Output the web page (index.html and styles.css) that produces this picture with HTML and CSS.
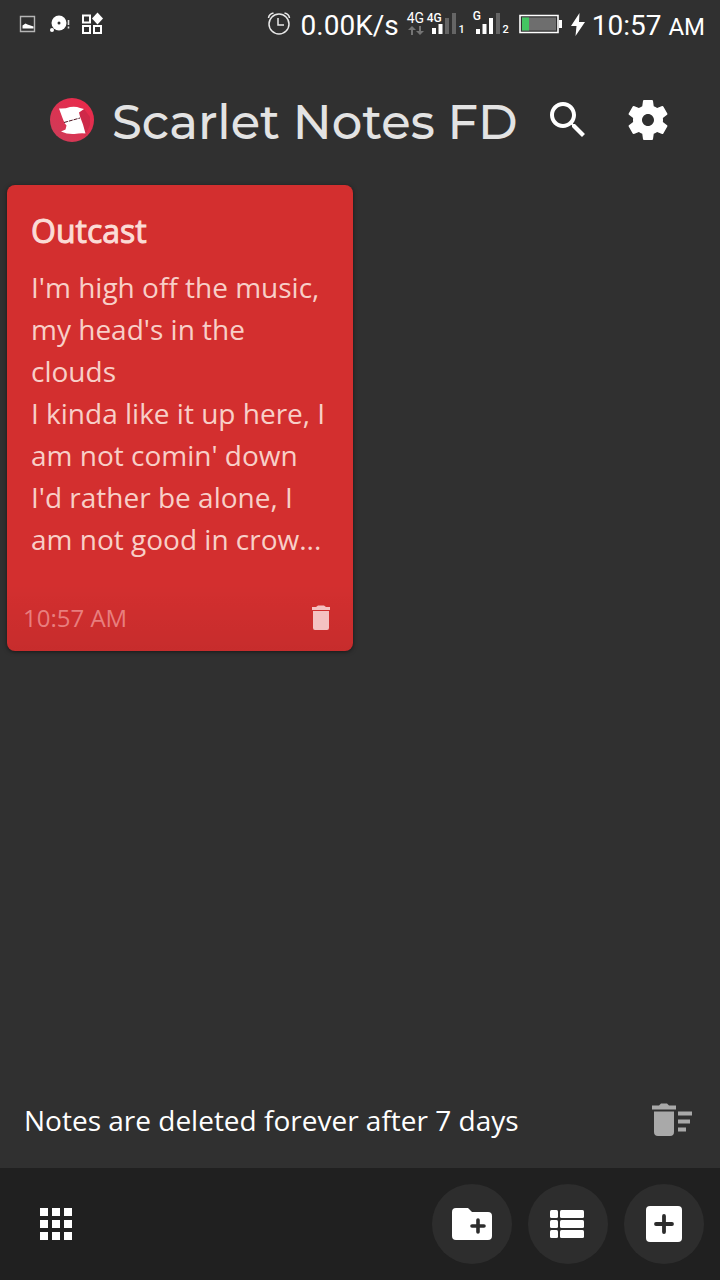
FILE: index.html
```html
<!DOCTYPE html>
<html lang="en">
<head>
<meta charset="utf-8">
<meta name="viewport" content="width=device-width, initial-scale=1">
<title>Scarlet Notes FD</title>
<link rel="stylesheet" href="styles.css">
</head>
<body>
<div class="app">
  <div class="status">
    <svg class="status-left" width="90" height="48" viewBox="0 0 90 48" aria-hidden="true">
      <path d="M4.500 16.500h14v15h-14z" fill="none" stroke="#b5b5b5" stroke-width="1.400"/>
      <path d="M6.500 28.500v-3l3-2 2 1 3 1 3 1v2z" fill="#fff"/>
      <circle cx="43" cy="23" r="7.500" fill="#fff"/><circle cx="43" cy="23" r="1.500" fill="#303030"/>
      <circle cx="36" cy="30" r="2" fill="#fff"/>
      <path d="M52.500 20v5M52.500 26.500v2" stroke="#ddd" stroke-width="1.600"/>
      <path d="M67 15.500h7v7h-7zM67 26h7v7h-7zM78 26h7v7h-7z" fill="none" stroke="#fff" stroke-width="2"/>
      <path d="M81.500 12.500l5.500 6-5.500 6-5.500-6z" fill="#fff"/>
    </svg>
    <svg class="status-alarm" width="24" height="48" viewBox="0 0 24 48" aria-hidden="true" fill="none" stroke="#e8e8e8" stroke-width="1.500">
      <circle cx="12" cy="24" r="10"/><path d="M11 18v7h6M1.500 18q.5-4 5-5M22.500 18q-.5-4-5-5"/>
    </svg>
    <span class="speed">0.00K/s</span>
    <div class="signal signal-one">
      <svg width="60" height="48" viewBox="0 0 60 48" aria-hidden="true">
        <path d="M4 35v-5H1l4-4 4 4H6v5zM12 26v5H9l4 4 4-4h-3v-5z" fill="#747474"/>
        <path d="M25 28h4v6h-4zM31.500 24h4v10h-4z" fill="#fff"/>
        <path d="M38 18h4v16h-4zM45 13h4v21h-4z" fill="#656565"/>
      </svg>
      <span class="net net-main">4G</span><span class="net net-sub">4G</span><span class="sim">1</span>
    </div>
    <div class="signal signal-two">
      <svg width="38" height="48" viewBox="0 0 38 48" aria-hidden="true">
        <path d="M3 29h4v5H3zM9.500 24h4v10h-4zM16 18h4v16h-4z" fill="#fff"/>
        <path d="M23 13h4v21h-4z" fill="#656565"/>
      </svg>
      <span class="net net-g">G</span><span class="sim">2</span>
    </div>
    <svg class="battery" width="44" height="48" viewBox="0 0 44 48" aria-hidden="true">
      <path d="M2 15.500h38v17H2z" fill="#303030" stroke="#fff" stroke-width="1.600"/>
      <path d="M4 17.500h34v13H4z" fill="#6e6e6e"/><path d="M4 17.500h7v13H4z" fill="#43c562"/>
      <path d="M41 20h3v8h-3z" fill="#fff"/>
    </svg>
    <svg class="bolt" width="16" height="48" viewBox="0 0 16 48" aria-hidden="true"><path d="M9.500 13L1 26h5.500L5.500 36 15 22H9z" fill="#fff"/></svg>
    <span class="clock">10:57 <span class="meridiem">AM</span></span>
  </div>

  <header class="toolbar">
    <svg class="logo" width="44" height="44" viewBox="0 0 44 44" aria-hidden="true">
      <defs><linearGradient id="brand" x1="0" y1="1" x2="1" y2="0"><stop offset="0" stop-color="#cc3d59"/><stop offset="1" stop-color="#ee2749"/></linearGradient></defs>
      <circle cx="22" cy="22" r="22" fill="url(#brand)"/>
      <path d="M28 14l6-3 6 8v8l-5 11z" fill="#b92343" opacity=".5"/>
      <path d="M9 10.500q6 .5 11-1.500 6-1 10 1l4 1-5 3.500 1 4 3 8 2.500 9q-5-.5-11 .5-7 .5-13.500-2.500l4.500-2 1-4-2-2.500-2-5z" fill="#fff"/>
      <path d="M14 24.500L30 20" stroke="#4d1420" stroke-width="1" stroke-dasharray="4 1"/>
    </svg>
    <h1 class="brand">Scarlet Notes FD</h1>
    <button class="tool" type="button" aria-label="Search">
      <svg width="48" height="48" viewBox="0 0 24 24"><path fill="#fff" d="M15.500 14h-.79l-.28-.27C15.410 12.590 16 11.110 16 9.500 16 5.910 13.090 3 9.500 3S3 5.910 3 9.500 5.910 16 9.500 16c1.610 0 3.090-.59 4.230-1.570l.27.28v.79l5 4.990L20.490 19l-4.990-5zm-6 0C7.010 14 5 11.990 5 9.500S7.010 5 9.500 5 14 7.010 14 9.500 11.990 14 9.500 14z"/></svg>
    </button>
    <button class="tool" type="button" aria-label="Settings">
      <svg width="48" height="48" viewBox="0 0 24 24"><path fill="#fff" d="M19.430 12.980c.04-.32.07-.64.07-.98s-.03-.66-.07-.98l2.110-1.650c.19-.15.24-.42.12-.64l-2-3.460c-.12-.22-.39-.3-.61-.22l-2.490 1c-.52-.4-1.080-.73-1.690-.98l-.38-2.650C14.460 2.180 14.250 2 14 2h-4c-.25 0-.46.18-.49.42l-.38 2.650c-.61.25-1.170.59-1.690.98l-2.490-1c-.23-.09-.49 0-.61.22l-2 3.460c-.13.22-.07.49.12.64l2.110 1.650c-.04.32-.07.65-.07.98s.03.66.07.98l-2.110 1.650c-.19.15-.24.42-.12.64l2 3.460c.12.22.39.3.61.22l2.490-1c.52.4 1.080.73 1.690.98l.38 2.650c.03.24.24.42.49.42h4c.25 0 .46-.18.49-.42l.38-2.650c.61-.25 1.170-.59 1.690-.98l2.490 1c.23.09.49 0 .61-.22l2-3.460c.12-.22.07-.49-.12-.64l-2.110-1.650zM12 15c-1.650 0-3-1.350-3-3s1.350-3 3-3 3 1.350 3 3-1.350 3-3 3z"/></svg>
    </button>
  </header>

  <main class="notes">
    <article class="note">
      <h2 class="note-title">Outcast</h2>
      <p class="note-text">I'm high off the music, my head's in the clouds<br>I kinda like it up here, I am not comin' down<br>I'd rather be alone, I am not good in crow...</p>
      <footer class="note-footer">
        <time class="note-time">10:57 AM</time>
        <button class="note-delete" type="button" aria-label="Delete note">
          <svg width="18" height="26" viewBox="0 0 18 26" fill="#f4c1c1"><path d="M0 5V2h4l2-1.500h6L14 2h4v3zM1 6h16v17q0 2-2 2H3q-2 0-2-2z"/></svg>
        </button>
      </footer>
    </article>
  </main>

  <div class="notice">
    <p class="notice-text">Notes are deleted forever after 7 days</p>
    <button class="notice-clear" type="button" aria-label="Empty trash">
      <svg width="42" height="34" viewBox="0 0 42 34" fill="#a9a9a9"><path d="M1 6.500V2.500h7l2-2h6l2 2h7v4zM3 8.500h20V29q0 4-4 4H7q-4 0-4-4zM27 8.500h14v4H27zM27 16.500h12v4H27zM27 24.500h8v4H27z"/></svg>
    </button>
  </div>

  <nav class="bottom-bar" aria-label="Actions">
    <button class="apps" type="button" aria-label="Menu">
      <svg width="32" height="32" viewBox="0 0 32 32" fill="#fff"><path d="M0 0h8v8H0zM12 0h8v8h-8zM24 0h8v8h-8zM0 12h8v8H0zM12 12h8v8h-8zM24 12h8v8h-8zM0 24h8v8H0zM12 24h8v8h-8zM24 24h8v8h-8z"/></svg>
    </button>
    <button class="round" type="button" aria-label="New folder">
      <svg width="40" height="32" viewBox="0 0 40 32"><path fill="#fff" d="M4 0h12l4 4h16q4 0 4 4v20q0 4-4 4H4q-4 0-4-4V4q0-4 4-4z"/><path d="M26 12v12M20 18h12" stroke="#2c2c2c" stroke-width="3.600" stroke-linecap="round"/></svg>
    </button>
    <button class="round" type="button" aria-label="New checklist">
      <svg width="36" height="28" viewBox="0 0 36 28" fill="#fff"><rect width="8" height="8" rx="1.500"/><rect x="10" width="24" height="8" rx="1.500"/><rect y="10" width="8" height="8" rx="1.500"/><rect x="10" y="10" width="24" height="8" rx="1.500"/><rect y="20" width="8" height="8" rx="1.500"/><rect x="10" y="20" width="24" height="8" rx="1.500"/></svg>
    </button>
    <button class="round" type="button" aria-label="New note">
      <svg width="36" height="36" viewBox="0 0 36 36"><rect width="36" height="36" rx="4" fill="#fff"/><path d="M18 10v16M10 18h16" stroke="#2c2c2c" stroke-width="3.800" stroke-linecap="round"/></svg>
    </button>
  </nav>
</div>
</body>
</html>
```
FILE: styles.css
```css
* {
  box-sizing: border-box;
}

body {
  margin: 0;
  background: #303030;
  color: #fff;
  font-family: "Open Sans", sans-serif;
}

h1,
h2,
p {
  margin: 0;
}

button {
  display: flex;
  align-items: center;
  justify-content: center;
  padding: 0;
  border: 0;
  background: none;
  cursor: pointer;
}

svg {
  display: block;
  flex: none;
}

.app {
  display: flex;
  flex-direction: column;
  min-height: 100vh;
}

.status {
  display: flex;
  align-items: center;
  height: 48px;
  padding: 0 15px 0 16px;
  font-family: Roboto, sans-serif;
  font-size: 28px;
  line-height: 48px;
  white-space: nowrap;
}

.status > * {
  flex: none;
}

.status-left + .status-alarm {
  margin-left: auto;
}

.speed {
  margin: 4px 8px 0 10px;
}

.signal {
  position: relative;
  height: 48px;
}

.signal-two {
  margin-left: 6px;
}

.net,
.sim {
  position: absolute;
  line-height: 12px;
}

.net {
  top: 12px;
  font-size: 14px;
}

.net-main {
  left: 0;
}

.net-sub {
  left: 20px;
  font-size: 12px;
  font-weight: 500;
}

.net-g {
  left: 0;
  top: 10px;
  font-size: 12px;
  font-weight: 500;
}

.sim {
  right: 2px;
  top: 24px;
  font-size: 11px;
  font-weight: 500;
}

.battery {
  margin-left: 7px;
}

.bolt {
  margin: 0 6px 0 8px;
}

.clock {
  margin-top: 4px;
}

.meridiem {
  font-size: 24px;
}

.toolbar {
  display: flex;
  align-items: center;
  height: 96px;
  margin-top: 24px;
  padding: 0 32px 0 50px;
}

.brand {
  flex: 1;
  padding-top: 4px;
  margin-left: 18px;
  color: #e3e3e3;
  font-family: Montserrat, Inter, sans-serif;
  font-size: 48px;
  font-weight: 500;
  line-height: 64px;
  white-space: nowrap;
}

.tool {
  width: 80px;
  height: 80px;
}

.notes {
  display: grid;
  flex: 1;
  grid-template-columns: 1fr 1fr;
  align-items: start;
  gap: 14px;
  padding: 17px 7px;
}

.note {
  overflow: hidden;
  border-radius: 8px;
  background: #d32f2f;
  box-shadow: 0 1px 4px rgba(0, 0, 0, 0.5);
}

.note-title {
  padding: 24px 24px 0;
  color: #fbdcd6;
  font-size: 32px;
  font-weight: 400;
  line-height: 44px;
  -webkit-text-stroke: 1px #fbdcd6;
}

.note-text {
  padding: 13px 24px 0;
  color: #f8cfc8;
  font-size: 28px;
  line-height: 42px;
}

.note-footer {
  display: flex;
  align-items: center;
  justify-content: space-between;
  margin-top: 24px;
  padding: 17px 23px 16px 16px;
  background: linear-gradient(transparent, rgba(0, 0, 0, 0.06));
}

.note-time {
  color: #e87e7e;
  font-size: 24px;
  line-height: 34px;
}

.notice {
  display: flex;
  align-items: center;
  justify-content: space-between;
  height: 96px;
  padding: 0 27px 0 24px;
}

.notice-text {
  font-size: 28px;
  line-height: 40px;
}

.bottom-bar {
  display: flex;
  align-items: center;
  gap: 16px;
  height: 112px;
  padding: 0 16px;
  background: #202020;
}

.apps {
  width: 80px;
  height: 80px;
  margin-right: auto;
}

.round {
  width: 80px;
  height: 80px;
  border-radius: 50%;
  background: #2d2d2d;
}
```
